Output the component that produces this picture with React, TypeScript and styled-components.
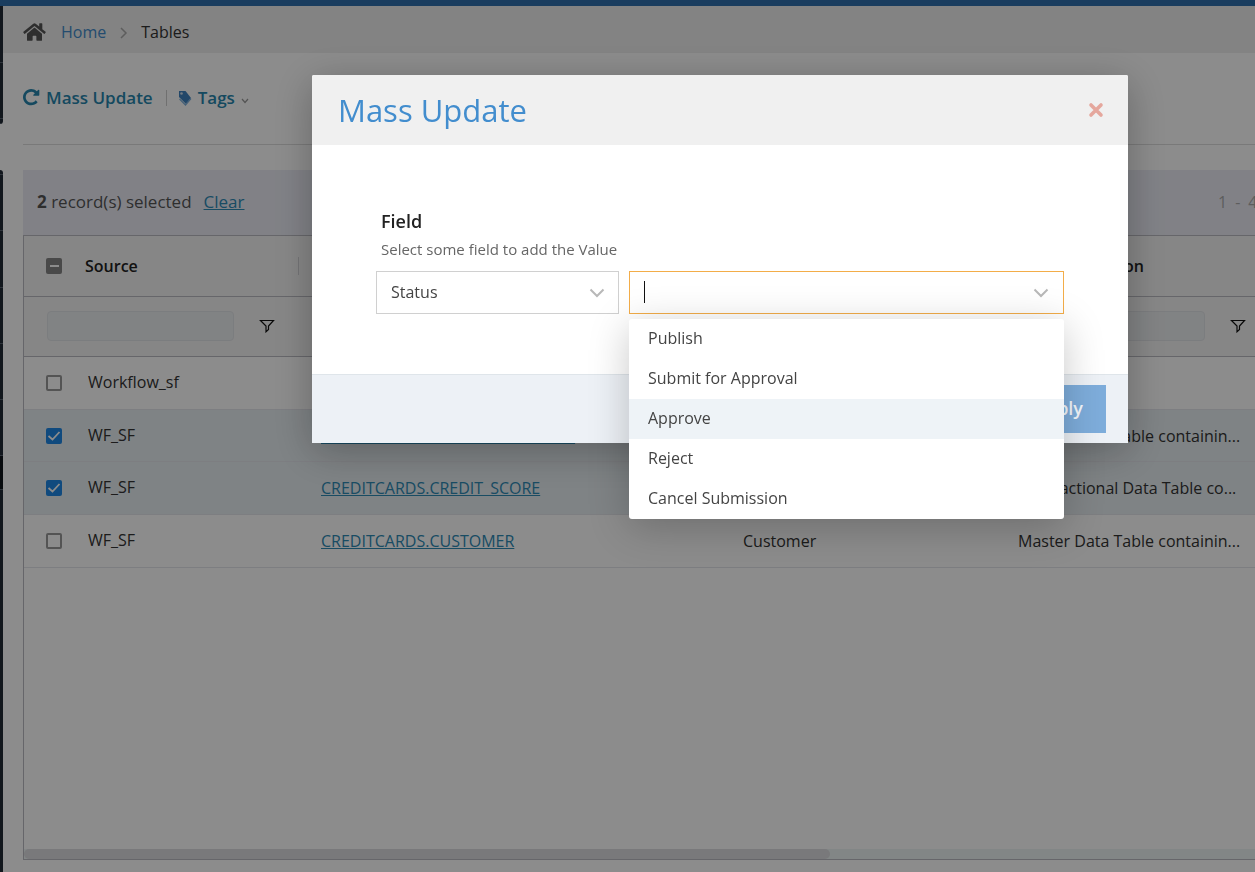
import React from "react";
import styled, { createGlobalStyle } from "styled-components";
import { FaHome } from "react-icons/fa";

const GlobalStyle = createGlobalStyle`
  * { box-sizing: border-box; }
  body {
    margin: 0;
    background: #fff;
    color: #333;
    font-family: "Open Sans", "Noto Sans", sans-serif;
    font-size: 16px;
    line-height: 24px;
    overflow: hidden;
  }
  button, input, select { font: inherit; color: inherit; }
`;

const Shell = styled.div`
  display: flex;
  flex-direction: column;
  height: 100vh;
`;

const TopBar = styled.div`
  flex: none;
  height: 6px;
  background: #316fae;
`;

const Body = styled.div`
  display: flex;
  flex: 1;
  min-height: 0;
`;

const Rail = styled.nav`
  flex: none;
  display: flex;
  flex-direction: column;
  width: 3px;
`;

const RailGroup = styled.div<{ $grow?: boolean }>`
  display: flex;
  flex-direction: column;
  flex: ${(p) => (p.$grow ? "1" : "none")};
  overflow: hidden;
  background: #212a35;
  border-radius: ${(p) => (p.$grow ? "0 3px 0 0" : "0 0 3px 0")};
  & + & { margin-top: 46px; }
`;

const RailItem = styled.div<{ $size: number; $active?: boolean }>`
  flex: none;
  height: ${(p) => p.$size}px;
  border-bottom: 1px solid #56606c;
  background: ${(p) => (p.$active ? "#10151a" : "transparent")};
`;

const Main = styled.main`
  flex: 1;
  min-width: 0;
  display: flex;
  flex-direction: column;
`;

const Breadcrumb = styled.nav`
  flex: none;
  display: flex;
  align-items: center;
  height: 47px;
  padding: 4px 20px 0;
  background: #eee;
`;

const HomeIcon = styled(FaHome)`
  width: 23px;
  height: 20px;
  margin-right: 15px;
  color: #555;
`;

const CrumbLink = styled.a`
  color: #428bca;
  text-decoration: none;
`;

const CrumbArrow = styled.svg`
  width: 8px;
  height: 12px;
  margin: 2px 13px 0 14px;
  fill: none;
  stroke: #aaa;
  stroke-width: 1.5;
`;

const Toolbar = styled.div`
  flex: none;
  display: flex;
  align-items: center;
  height: 92px;
  margin-left: 20px;
  padding-bottom: 2px;
  border-bottom: 1px solid #ddd;
`;

const ToolButton = styled.button`
  display: flex;
  align-items: center;
  gap: 6px;
  padding: 0;
  border: 0;
  background: none;
  color: #2786ae;
  font-size: 17px;
  font-weight: 600;
`;

const ToolDivider = styled.span`
  width: 1px;
  height: 16px;
  margin: 0 11px 0 13px;
  background: #ccc;
`;

const SelectionBar = styled.div`
  flex: none;
  display: flex;
  align-items: center;
  justify-content: space-between;
  height: 65px;
  margin: 25px 0 0 20px;
  padding: 0 0 2px 14px;
  background: #ebecf5;
  font-size: 17px;
  color: #555;
`;

const SelectionText = styled.span`
  display: flex;
  gap: 12px;
  font-size: 17px;
`;

const ClearLink = styled.a`
  color: #2e8ab5;
  text-decoration: underline;
`;

const PageCount = styled.span`
  flex: none;
  display: flex;
  gap: 8px;
  width: 37px;
  font-size: 16px;
  color: #aaa;
`;

const GridFrame = styled.div`
  flex: 1;
  min-height: 0;
  display: flex;
  flex-direction: column;
  justify-content: space-between;
  overflow: hidden;
  margin: 0 0 12px 20px;
  border: 1px solid #bbbbc2;
  border-right: 0;
`;

const Grid = styled.table`
  width: 1246px;
  table-layout: fixed;
  border-collapse: separate;
  border-spacing: 0;
`;

const HeadCell = styled.th<{ $indent: number }>`
  height: 61px;
  padding: 0 0 0 ${(p) => p.$indent}px;
  border-bottom: 1px solid #bbbbc2;
  background: #f5f5f5;
  color: #222;
  font-weight: 600;
  text-align: left;
  white-space: nowrap;
`;

const HeadLabel = styled.div`
  flex: 1;
  height: 18px;
  padding-left: 23px;
  line-height: 18px;
  border-right: 1px solid #d2d2d6;
`;

const FilterCell = styled.td`
  height: 60px;
  padding: 0 24px 2px 23px;
  border-bottom: 1px solid #bbbbc2;
  background: #f5f5f5;
`;

const FilterBox = styled.div`
  display: flex;
  align-items: center;
  justify-content: space-between;
`;

const FilterInput = styled.input<{ $width: number }>`
  width: ${(p) => p.$width}px;
  height: 30px;
  border: 1px solid #e1e3e7;
  border-radius: 4px;
  background: #eceff1;
`;

const FilterButton = styled.button`
  display: flex;
  padding: 0;
  border: 0;
  background: none;
  svg { width: 16px; height: 14px; }
`;

const Row = styled.tr<{ $selected?: boolean }>`
  background: ${(p) => (p.$selected ? "#e7eef2" : "#fff")};
`;

const Cell = styled.td<{ $indent: number }>`
  height: 53px;
  padding: 0 0 0 ${(p) => p.$indent}px;
  border-bottom: 1px solid #e4e5ec;
  overflow: hidden;
  white-space: nowrap;
  ${Row}:nth-child(2) & { height: 52px; }
`;

const TableLink = styled.a`
  color: #2e8ab5;
  text-decoration: underline;
`;

const Tick = styled.input`
  appearance: none;
  display: block;
  width: 16px;
  height: 16px;
  margin: 0;
  border: 2px solid #9a9a9a;
  border-radius: 2px;
  &:checked {
    border: 0;
    background: #1e88e5 url("data:image/svg+xml,%3Csvg xmlns='http://www.w3.org/2000/svg' viewBox='0 0 16 16'%3E%3Cpath d='M2.500 8l4 3.500L13.500 4' fill='none' stroke='white' stroke-width='1.800'/%3E%3C/svg%3E");
  }
`;

const MixedTick = styled(Tick)`
  &, &:checked {
    border: 0;
    background: linear-gradient(#fff, #fff) center / 9px 2px no-repeat #858585;
  }
`;

const TickLine = styled.div`
  display: flex;
  align-items: center;
`;

const SourceText = styled.span`
  padding: 0 0 2px 26px;
`;

const ScrollTrack = styled.div`
  flex: none;
  height: 10px;
  background: #edf5f4;
`;

const ScrollThumb = styled.div`
  width: 65.5%;
  height: 10px;
  border-radius: 5px;
  background: #dcdde0;
`;

const Backdrop = styled.div`
  position: fixed;
  inset: 0;
  padding: 75px 127px 0 312px;
  background: rgba(0, 0, 0, 0.45);
`;

const Dialog = styled.section`
  border-radius: 2px 2px 0 0;
  background: #fff;
  box-shadow: 0 8px 40px rgba(0, 0, 0, 0.28);
`;

const DialogHeader = styled.header`
  display: flex;
  align-items: center;
  justify-content: space-between;
  height: 70px;
  padding: 0 24px 0 26px;
  border-radius: 2px 2px 0 0;
  background: #f0f0f0;
`;

const DialogTitle = styled.h2`
  margin: 0;
  color: #428dce;
  font-size: 31px;
  line-height: 40px;
  font-weight: 400;
`;

const CloseButton = styled.button`
  display: flex;
  padding: 0;
  border: 0;
  background: none;
  svg { width: 16px; height: 16px; }
`;

const DialogBody = styled.div`
  padding: 64px 64px 60px;
`;

const FieldLabel = styled.label`
  display: block;
  padding-left: 5px;
  color: #222;
  font-size: 18px;
  font-weight: 600;
`;

const Hint = styled.p`
  margin: 4px 0 10px;
  padding-left: 5px;
  color: #666;
  font-size: 15px;
`;

const FieldRow = styled.div`
  display: flex;
  gap: 10px;
`;

const SelectBox = styled.div`
  flex: none;
  display: grid;
  align-items: center;
  width: 243px;
  > * { grid-area: 1 / 1; }
`;

const Select = styled.select`
  appearance: none;
  width: 100%;
  height: 43px;
  padding: 0 14px 2px;
  border: 1px solid #d0d0d0;
  border-radius: 0;
  background: #fff;
  color: #444;
`;

const Chevron = styled.svg`
  flex: none;
  justify-self: end;
  width: 16px;
  height: 10px;
  margin-right: 14px;
  fill: none;
  stroke: #b8b8b8;
  stroke-width: 2;
  pointer-events: none;
`;

const Combo = styled.div`
  position: relative;
  flex: 1;
  display: flex;
  align-items: center;
  height: 43px;
  padding-left: 14px;
  border: 1px solid #f3ad49;
  background: #fff;
`;

const Caret = styled.span`
  width: 1px;
  height: 22px;
  margin-bottom: 2px;
  background: #111;
`;

const ComboInput = styled.input`
  flex: 1;
  min-width: 0;
  height: 36px;
  padding: 0;
  border: 0;
  outline: 0;
  background: none;
`;

const OptionList = styled.ul`
  position: absolute;
  top: 47px;
  left: -1px;
  right: -1px;
  margin: 0;
  padding: 0;
  list-style: none;
  border-radius: 3px;
  background: #fff;
  box-shadow: 0 8px 40px rgba(0, 0, 0, 0.22);
`;

const Option = styled.li<{ $active?: boolean }>`
  height: 40px;
  padding: 0 19px;
  line-height: 38px;
  color: #444;
  background: ${(p) => (p.$active ? "#eef3f7" : "transparent")};
`;

const DialogFooter = styled.footer`
  display: flex;
  justify-content: flex-end;
  height: 69px;
  padding: 10px 22px;
  border-top: 1px solid #dfe5ea;
  background: #edf1f6;
`;

const ApplyButton = styled.button`
  height: 48px;
  padding: 0 23px 2px;
  border: 0;
  background: #7eaddb;
  color: #f4f8fc;
  font-size: 18px;
  font-weight: 600;
`;

const RefreshIcon = () => (
  <svg width="17" height="17" viewBox="128 128 1600 1600" fill="currentColor" aria-hidden="true">
    <path d="M1664 256v448q0 26-19 45t-45 19h-448q-42 0-59-40-17-39 14-69l138-138q-148-137-349-137-104 0-198.500 40.500t-163.500 109.500-109.500 163.500-40.500 198.500 40.500 198.500 109.500 163.500 163.500 109.500 198.500 40.500q119 0 225-52t179-147q7-10 23-12 15 0 25 9l137 138q9 8 9.500 20.500t-7.500 22.500q-109 132-264 204.500t-327 72.500q-156 0-298-61t-245-164-164-245-61-298 61-298 164-245 245-164 298-61q147 0 284.500 55.500t244.500 156.500l130-129q29-31 70-14 39 17 39 59z" />
  </svg>
);

const TagIcon = () => (
  <svg width="14" height="16" viewBox="0 0 14 16" aria-hidden="true">
    <path d="M1 1h6.500l5.500 7-5 6L1 7z" fill="#3f82bf" />
    <path d="M1.500 9l6 6L13 8.500" fill="none" stroke="#7fb0da" strokeWidth="1.2" />
    <circle cx="3.500" cy="3.500" r="1.3" fill="#cfe0ee" />
  </svg>
);

const FilterIcon = () => (
  <svg viewBox="0 0 16 14" fill="none" stroke="#111" strokeWidth="1.2" aria-hidden="true">
    <path d="M1.500 1.500h13L9.500 7v3.500L7 12.800V7z" />
  </svg>
);

type TableRecord = { source: string; table: string; name: string; description: string; selected?: boolean };

const records: TableRecord[] = [
  { source: "Workflow_sf", table: "", name: "", description: "" },
  { source: "WF_SF", table: "CREDITCARDS.CREDIT_CARD_TYPE", name: "", description: "Master Data Table containin...", selected: true },
  { source: "WF_SF", table: "CREDITCARDS.CREDIT_SCORE", name: "", description: "Transactional Data Table co...", selected: true },
  { source: "WF_SF", table: "CREDITCARDS.CUSTOMER", name: "Customer", description: "Master Data Table containin..." },
];

const options = ["Publish", "Submit for Approval", "Approve", "Reject", "Cancel Submission"];
const filterWidths = [187, 340, 187, 187];

export default function App() {
  return (
    <>
      <GlobalStyle />
      <Shell>
        <TopBar />
        <Body>
          <Rail aria-label="Sections">
            <RailGroup>
              <RailItem $size={57} />
              <RailItem $size={56} />
              <RailItem $size={5} />
            </RailGroup>
            <RailGroup $grow>
              <RailItem $size={5} />
              <RailItem $size={56} />
              <RailItem $size={57} />
              <RailItem $size={56} />
              <RailItem $size={56} />
              <RailItem $size={56} />
              <RailItem $size={34} $active />
            </RailGroup>
          </Rail>
          <Main>
            <Breadcrumb aria-label="Breadcrumb">
              <HomeIcon />
              <CrumbLink href="#home">Home</CrumbLink>
              <CrumbArrow viewBox="0 0 8 12"><path d="M1 1l5 5-5 5" /></CrumbArrow>
              <span>Tables</span>
            </Breadcrumb>
            <Toolbar>
              <ToolButton type="button"><RefreshIcon />Mass Update</ToolButton>
              <ToolDivider />
              <ToolButton type="button">
                <TagIcon />Tags
                <svg width="8" height="12" viewBox="0 0 8 12" fill="none" stroke="#999" strokeWidth="1.2"><path d="M1 7l3 3.500L7 7" /></svg>
              </ToolButton>
            </Toolbar>
            <SelectionBar>
              <SelectionText>
                <span><b>2</b> record(s) selected</span>
                <ClearLink href="#clear">Clear</ClearLink>
              </SelectionText>
              <PageCount><span>1</span><span>-</span><span>4</span></PageCount>
            </SelectionBar>
            <GridFrame>
              <Grid>
                <colgroup>
                  <col width="275" />
                  <col width="421" />
                  <col width="275" />
                  <col width="275" />
                </colgroup>
                <thead>
                  <tr>
                    <HeadCell $indent={22}>
                      <TickLine>
                        <MixedTick type="checkbox" aria-label="Select all records" />
                        <HeadLabel>Source</HeadLabel>
                      </TickLine>
                    </HeadCell>
                    <HeadCell $indent={22}>Table</HeadCell>
                    <HeadCell $indent={23}>Name</HeadCell>
                    <HeadCell $indent={14}>Table Description</HeadCell>
                  </tr>
                  <tr>
                    {filterWidths.map((w, i) => (
                      <FilterCell key={i}>
                        <FilterBox>
                          <FilterInput $width={w} aria-label={`Filter column ${i + 1}`} />
                          <FilterButton type="button" aria-label="Filter options"><FilterIcon /></FilterButton>
                        </FilterBox>
                      </FilterCell>
                    ))}
                  </tr>
                </thead>
                <tbody>
                  {records.map((r, i) => (
                    <Row key={i} $selected={r.selected}>
                      <Cell $indent={22}>
                        <TickLine>
                          <Tick type="checkbox" defaultChecked={r.selected} aria-label={`Select row ${i + 1}`} />
                          <SourceText>{r.source}</SourceText>
                        </TickLine>
                      </Cell>
                      <Cell $indent={22}>{r.table && <TableLink href="#table">{r.table}</TableLink>}</Cell>
                      <Cell $indent={23}>{r.name}</Cell>
                      <Cell $indent={23}>{r.description}</Cell>
                    </Row>
                  ))}
                </tbody>
              </Grid>
              <ScrollTrack><ScrollThumb /></ScrollTrack>
            </GridFrame>
          </Main>
        </Body>
      </Shell>
      <Backdrop>
        <Dialog role="dialog" aria-modal="true" aria-labelledby="dialog-title">
          <DialogHeader>
            <DialogTitle id="dialog-title">Mass Update</DialogTitle>
            <CloseButton type="button" aria-label="Close">
              <svg viewBox="0 0 16 16" fill="none" stroke="#e5a79d" strokeWidth="3.6" strokeLinecap="round"><path d="M3 3l10 10M13 3L3 13" /></svg>
            </CloseButton>
          </DialogHeader>
          <DialogBody>
            <FieldLabel htmlFor="field">Field</FieldLabel>
            <Hint>Select some field to add the Value</Hint>
            <FieldRow>
              <SelectBox>
                <Select id="field" defaultValue="Status"><option>Status</option></Select>
                <Chevron viewBox="0 0 16 10"><path d="M1.500 1.500L8 8l6.500-6.500" /></Chevron>
              </SelectBox>
              <Combo>
                <Caret />
                <ComboInput role="combobox" aria-label="Value" aria-expanded="true" aria-controls="values" />
                <Chevron viewBox="0 0 16 10"><path d="M1.500 1.500L8 8l6.500-6.500" /></Chevron>
                <OptionList id="values" role="listbox">
                  {options.map((o) => (
                    <Option key={o} role="option" aria-selected={o === "Approve"} $active={o === "Approve"}>{o}</Option>
                  ))}
                </OptionList>
              </Combo>
            </FieldRow>
          </DialogBody>
          <DialogFooter><ApplyButton type="button">Apply</ApplyButton></DialogFooter>
        </Dialog>
      </Backdrop>
    </>
  );
}
